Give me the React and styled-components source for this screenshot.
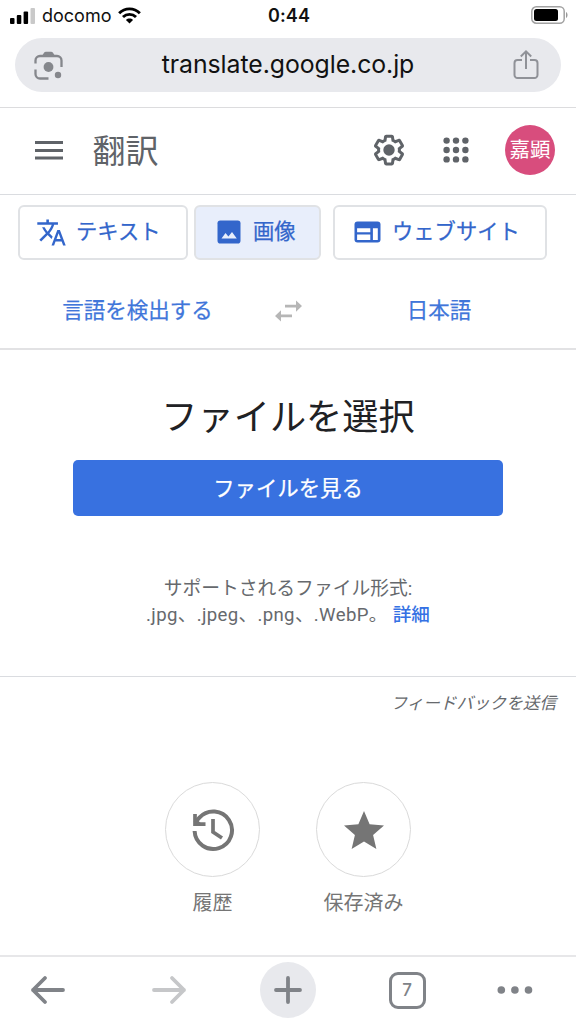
import React from 'react';
import styled, { createGlobalStyle } from 'styled-components';

const GlobalStyle = createGlobalStyle`
	* {
		box-sizing: border-box;
	}
	body {
		margin: 0;
		background: #fff;
		font-family: Roboto, 'Noto Sans CJK JP', sans-serif;
	}
	svg {
		display: block;
		flex-shrink: 0;
	}
	button {
		font-family: inherit;
		margin: 0;
		padding: 0;
		border: 0;
		background: none;
	}
`;

const Screen = styled.div`
	width: 576px;
	height: 1024px;
	display: flex;
	flex-direction: column;
	overflow: hidden;
	background: #fff;
`;

const StatusBar = styled.div`
	height: 38px;
	padding: 0 8px 7px 10px;
	display: grid;
	grid-template-columns: 1fr auto 1fr;
	align-items: center;
	font-family: Inter, sans-serif;
	font-size: 18px;
	color: #111;
`;

const Carrier = styled.div`
	display: flex;
	align-items: center;
	gap: 7px;
`;

const Clock = styled.div`
	font-weight: 600;
	font-size: 18px;
	letter-spacing: 0.1px;
`;

const Battery = styled.div`
	display: flex;
	justify-content: flex-end;
	padding-bottom: 1px;
`;

const AddressArea = styled.div`
	height: 70px;
	padding: 0 15px;
	border-bottom: 1px solid #dcdcde;
`;

const AddressBar = styled.div`
	height: 54px;
	padding: 0 22px 0 19px;
	border-radius: 27px;
	background: #e8e9ed;
	display: flex;
	align-items: center;
	justify-content: space-between;
	font-family: Inter, sans-serif;
	font-size: 24.8px;
	letter-spacing: -0.05px;
	color: #111;
`;

const Url = styled.span`
	padding-bottom: 2px;
`;

const Header = styled.header`
	height: 87px;
	padding: 0 21px 2px 34px;
	border-bottom: 1px solid #dadce0;
	display: flex;
	align-items: center;
`;

const Title = styled.h1`
	margin: 0 auto 0 28.5px;
	padding-top: 4px;
	font-size: 33px;
	font-weight: 400;
	line-height: 40px;
	color: #5f6368;
`;

const Avatar = styled.div`
	width: 50px;
	height: 50px;
	margin-left: 36px;
	border-radius: 50%;
	background: #d84d7d;
	color: #fff;
	font-size: 20.5px;
	line-height: 50px;
	text-align: center;
`;

const AppsButton = styled.div`
	margin-left: 36px;
`;

const Tabs = styled.nav`
	padding: 10px 0 0 18px;
	display: flex;
`;

const Tab = styled.button`
	width: ${props => props.$width}px;
	height: 55px;
	margin-right: ${props => props.$gap || 0}px;
	padding: 0 0 1px ${props => props.$inset}px;
	border: 2px solid #e0e2e5;
	border-radius: 6px;
	background: ${props => (props.$active ? '#e8eefb' : '#fff')};
	color: #3366cb;
	display: flex;
	align-items: center;
	gap: ${props => props.$space}px;
	font-size: 21.3px;
	font-weight: 400;
	line-height: 30px;
	-webkit-text-stroke: 0.25px;
`;

const Languages = styled.div`
	height: 90px;
	padding-top: 14px;
	border-bottom: 2px solid #e2e2e4;
	display: grid;
	grid-template-columns: 275px 27px 274px;
	align-items: center;
`;

const Language = styled.button`
	font-size: 21.5px;
	font-weight: 400;
	line-height: 30px;
	color: #4076da;
	-webkit-text-stroke: 0.25px;
`;

const Upload = styled.main`
	height: 327px;
	padding-top: 41px;
	border-bottom: 1px solid #dadce0;
	display: flex;
	flex-direction: column;
	align-items: center;
`;

const Heading = styled.h2`
	margin: 0;
	font-size: 36.2px;
	font-weight: 400;
	line-height: 54px;
	color: #202124;
`;

const BrowseButton = styled.button`
	width: 430px;
	height: 56px;
	margin: 15px 0 60px;
	padding-top: 1px;
	border-radius: 5px;
	background: #3871e0;
	color: #fff;
	font-size: 21.4px;
	font-weight: 400;
	line-height: 30px;
	-webkit-text-stroke: 0.25px;
`;

const Formats = styled.p`
	margin: 0;
	font-size: 18.8px;
	line-height: 26px;
	text-align: center;
	color: #66696d;
`;

const FormatList = styled.span`
	font-size: 18.6px;
	letter-spacing: 0.35px;
`;

const DetailLink = styled.a`
	margin-left: 5px;
	font-size: 18.6px;
	font-weight: 500;
	color: #3471e4;
`;

const Feedback = styled.div`
	height: 105px;
	padding: 15px 20px 0 0;
	text-align: right;
	font-size: 16.6px;
	font-style: italic;
	line-height: 24px;
	color: #66696d;
`;

const Shortcuts = styled.div`
	height: 173px;
	display: flex;
	justify-content: center;
	gap: 56px;
`;

const Shortcut = styled.div`
	width: 95px;
	display: flex;
	flex-direction: column;
	align-items: center;
	font-size: 20px;
	line-height: 30px;
	color: #757575;
	white-space: nowrap;
`;

const ShortcutCircle = styled.div`
	width: 95px;
	height: 95px;
	margin-bottom: 11px;
	border: 1px solid #dadada;
	border-radius: 50%;
	display: flex;
	align-items: center;
	justify-content: center;
`;

const BottomBar = styled.footer`
	height: 69px;
	border-top: 2px solid #e7e7e9;
	padding: 0 25px 1px 0;
	display: grid;
	grid-template-columns: 96px 145px 94px 144px 1fr;
	align-items: center;
	justify-items: center;
`;

const NewTab = styled.button`
	width: 56px;
	height: 56px;
	border-radius: 50%;
	background: #e8e9ed;
	display: flex;
	align-items: center;
	justify-content: center;
`;

const TabCount = styled.button`
	width: 37px;
	height: 37px;
	border: 3px solid #808388;
	border-radius: 9px;
	font-family: Inter, sans-serif;
	font-size: 17px;
	font-weight: 500;
	line-height: 31px;
	color: #808388;
`;

const SignalIcon = () => (
	<svg width="25" height="16" viewBox="0 0 25 16">
		<rect x="0" y="10" width="4.5" height="6" rx="1" fill="#000" />
		<rect x="6.8" y="7" width="4.5" height="9" rx="1" fill="#000" />
		<rect x="13.6" y="3.5" width="4.5" height="12.5" rx="1" fill="#000" />
		<rect x="20.5" y="0" width="4.5" height="16" rx="1" fill="#c9c9c9" />
	</svg>
);

const WifiIcon = () => (
	<svg width="23" height="17" viewBox="0 0 24 17" fill="none" stroke="#000" strokeWidth="3">
		<path d="M1.2 6.1C7.2.1 16.8.1 22.8 6.1" />
		<path d="M5.2 10.1c3.8-3.7 9.8-3.7 13.6 0" />
		<path d="M8.3 13.1c2.1-2 5.3-2 7.4 0L12 16.9z" fill="#000" stroke="none" />
	</svg>
);

const BatteryIcon = () => (
	<svg width="37" height="18" viewBox="0 0 37 18">
		<rect x=".8" y=".8" width="32.4" height="16.4" rx="4.5" fill="none" stroke="#a2a2a2" strokeWidth="1.5" />
		<rect x="3" y="3" width="24" height="12" rx="2.5" fill="#000" />
		<path d="M35 6c2 .8 2 5.2 0 6z" fill="#999" />
	</svg>
);

const LensIcon = () => (
	<svg width="29" height="29" viewBox="0 0 29 29" fill="none" stroke="#85878c" strokeWidth="2.3">
		<path d="M1.5 12.5V9.5A4.5 4.5 0 0 1 6 5h17a4.5 4.5 0 0 1 4.5 4.5V16" />
		<path d="M1.5 18.5V23A4.5 4.5 0 0 0 6 27.5h8.5" />
		<path d="M8 5l2-3.2Q10.6.8 12 .8h5q1.4 0 2 1L21 5z" fill="#85878c" stroke="none" />
		<circle cx="14.5" cy="16" r="4.9" fill="#85878c" stroke="none" />
		<circle cx="24" cy="24" r="3.2" fill="#85878c" stroke="none" />
	</svg>
);

const ShareIcon = () => (
	<svg width="26" height="30" viewBox="0 0 26 30" fill="none" stroke="#909298" strokeWidth="2">
		<path d="M9 10H4.5a3 3 0 0 0-3 3v12a3 3 0 0 0 3 3h17a3 3 0 0 0 3-3V13a3 3 0 0 0-3-3H17" />
		<path d="M13 19V1.5M7.8 6.5L13 1.4l5.2 5.1" />
	</svg>
);

const MenuIcon = () => (
	<svg width="30" height="20" viewBox="0 0 30 20" fill="#5f6368">
		<rect x="1" y="1" width="28" height="3" />
		<rect x="1" y="9" width="28" height="3" />
		<rect x="1" y="16.5" width="28" height="3" />
	</svg>
);

const SettingsIcon = () => (
	<svg width="36" height="36" viewBox="0 0 24 24" fill="#5f6368">
		<path d="M13.85 22.25h-3.7c-.74 0-1.36-.54-1.45-1.27l-.27-1.89c-.27-.14-.53-.29-.79-.46l-1.8.72c-.7.26-1.47-.03-1.81-.65L2.2 15.53c-.35-.66-.2-1.44.36-1.88l1.53-1.19c-.01-.15-.02-.3-.02-.46 0-.15.01-.31.02-.46l-1.52-1.19c-.59-.45-.74-1.26-.37-1.88l1.85-3.19c.34-.62 1.11-.9 1.79-.63l1.81.73c.26-.17.52-.32.78-.46l.27-1.91c.09-.7.71-1.25 1.44-1.25h3.7c.74 0 1.36.54 1.45 1.27l.27 1.89c.27.14.53.29.79.46l1.8-.72c.71-.26 1.48.03 1.82.65l1.84 3.18c.36.66.2 1.44-.36 1.88l-1.52 1.19c.01.15.02.3.02.46s-.01.31-.02.46l1.52 1.19c.56.45.72 1.23.37 1.86l-1.86 3.22c-.34.62-1.11.9-1.8.63l-1.8-.72c-.26.17-.52.32-.78.46l-.27 1.91c-.1.68-.72 1.22-1.46 1.22zm-3.23-2h2.76l.37-2.55.53-.22c.44-.18.88-.44 1.34-.78l.45-.34 2.38.96 1.38-2.4-2.03-1.58.07-.56c.03-.26.06-.51.06-.78s-.03-.53-.06-.78l-.07-.56 2.03-1.58-1.39-2.4-2.39.96-.45-.35c-.42-.32-.87-.58-1.33-.77l-.52-.22-.37-2.55h-2.76l-.37 2.55-.53.21c-.44.19-.88.44-1.34.79l-.45.33-2.38-.95-1.39 2.39 2.03 1.58-.07.56a7 7 0 0 0-.06.79c0 .26.02.53.06.78l.07.56-2.03 1.58 1.38 2.4 2.39-.96.45.35c.43.33.86.58 1.33.77l.53.22.38 2.55z" />
		<circle cx="12" cy="12" r="3.8" />
	</svg>
);

const AppsIcon = () => (
	<svg width="26" height="26" viewBox="0 0 26 26" fill="#5f6368">
		{[3.6, 13, 22.4].map(y =>
			[3.6, 13, 22.4].map(x => <circle key={`${x}-${y}`} cx={x} cy={y} r="3.2" />)
		)}
	</svg>
);

const TranslateIcon = () => (
	<svg width="31" height="31" viewBox="0 0 24 24" fill="#3366cb">
		<path d="M12.87 15.07l-2.54-2.51.03-.03c1.74-1.94 2.98-4.17 3.71-6.53H17V4h-7V2H8v2H1v1.99h11.17C11.5 7.92 10.44 9.75 9 11.35 8.07 10.32 7.3 9.19 6.69 8h-2c.73 1.63 1.73 3.17 2.98 4.56l-5.09 5.02L4 19l5-5 3.11 3.11.76-2.04zM18.5 10h-2L12 22h2l1.12-3h4.75L21 22h2l-4.5-12zm-2.62 7l1.62-4.33L19.12 17h-3.24z" />
	</svg>
);

const ImageIcon = () => (
	<svg width="24" height="24" viewBox="0 0 24 24">
		<rect x=".5" y=".5" width="23" height="23" rx="2.8" fill="#3366cb" />
		<path d="M4.5 18.5l4-5.5 2.9 3.4 3.6-4.4 4.8 6.5z" fill="#e8eefb" />
	</svg>
);

const WebIcon = () => (
	<svg width="27" height="22" viewBox="0 0 27 22">
		<rect x=".5" y=".5" width="26" height="21" rx="3" fill="#3366cb" />
		<path d="M3.1 7.2h13.2v4H3.1zM3.1 13.5h13.2V19H3.1zM18.9 7.2h4.9V19h-4.9z" fill="#fff" />
	</svg>
);

const SwapIcon = () => (
	<svg width="27" height="22" viewBox="0 0 27 22" fill="#b6b6b6">
		<path d="M10 4.7h11V.5l6 5.6-6 5.6V7.5H10z" />
		<path d="M17 14.5H6v-4.2l-6 5.6 6 5.6v-4.2h11z" />
	</svg>
);

const HistoryIcon = () => (
	<svg width="44" height="44" viewBox="0 0 44 44" fill="none" stroke="#757575" strokeWidth="4">
		<path d="M3.6 23a18.7 18.7 0 1 0 4.8-13.3L4 14.5" />
		<path d="M4 6v10.2h10.5" strokeWidth="3.7" />
		<path d="M22 11v13l9 6" strokeWidth="3.7" />
		<path d="M4 9.5v6.700h7z" fill="#757575" stroke="none" />
	</svg>
);

const StarIcon = () => (
	<svg width="40" height="38" viewBox="0 0 20 19" fill="#757575">
		<path d="M10 15.27L16.18 19l-1.64-7.03L20 7.24l-7.19-.61L10 0 7.19 6.63 0 7.24l5.46 4.73L3.82 19z" />
	</svg>
);

const ArrowIcon = ({ color, forward }) => (
	<svg width="36" height="30" viewBox="0 0 36 30" fill="none" stroke={color} strokeWidth="3.8" strokeLinecap="round" strokeLinejoin="round">
		<path d={forward ? 'M3 15h30M21 3l12 12-12 12' : 'M33 15H3M15 3L3 15l12 12'} />
	</svg>
);

const PlusIcon = () => (
	<svg width="28" height="28" viewBox="0 0 28 28" stroke="#808388" strokeWidth="3.8" strokeLinecap="round">
		<path d="M14 2v24M2 14h24" />
	</svg>
);

const MoreIcon = () => (
	<svg width="36" height="8" viewBox="0 0 36 8" fill="#808388">
		<circle cx="4.3" cy="4" r="3.8" />
		<circle cx="17.9" cy="4" r="3.8" />
		<circle cx="31.5" cy="4" r="3.8" />
	</svg>
);

class App extends React.Component {
	render() {
		return (
			<Screen>
				<GlobalStyle />
				<StatusBar>
					<Carrier>
						<SignalIcon />
						docomo
						<WifiIcon />
					</Carrier>
					<Clock>0:44</Clock>
					<Battery>
						<BatteryIcon />
					</Battery>
				</StatusBar>
				<AddressArea>
					<AddressBar>
						<LensIcon />
						<Url>translate.google.co.jp</Url>
						<ShareIcon />
					</AddressBar>
				</AddressArea>
				<Header>
					<MenuIcon />
					<Title>翻訳</Title>
					<SettingsIcon />
					<AppsButton>
						<AppsIcon />
					</AppsButton>
					<Avatar>嘉顕</Avatar>
				</Header>
				<Tabs>
					<Tab $width={170} $inset={16} $space={9} $gap={6}>
						<TranslateIcon />
						テキスト
					</Tab>
					<Tab $width={127} $inset={21} $space={12} $gap={12} $active>
						<ImageIcon />
						画像
					</Tab>
					<Tab $width={214} $inset={19} $space={11}>
						<WebIcon />
						ウェブサイト
					</Tab>
				</Tabs>
				<Languages>
					<Language>言語を検出する</Language>
					<SwapIcon />
					<Language>日本語</Language>
				</Languages>
				<Upload>
					<Heading>ファイルを選択</Heading>
					<BrowseButton>ファイルを見る</BrowseButton>
					<Formats>
						サポートされるファイル形式:
						<br />
						<FormatList>.jpg、.jpeg、.png、.WebP。</FormatList>
						<DetailLink>詳細</DetailLink>
					</Formats>
				</Upload>
				<Feedback>フィードバックを送信</Feedback>
				<Shortcuts>
					<Shortcut>
						<ShortcutCircle>
							<HistoryIcon />
						</ShortcutCircle>
						履歴
					</Shortcut>
					<Shortcut>
						<ShortcutCircle>
							<StarIcon />
						</ShortcutCircle>
						保存済み
					</Shortcut>
				</Shortcuts>
				<BottomBar>
					<ArrowIcon color="#808388" />
					<ArrowIcon color="#c6c7c9" forward />
					<NewTab>
						<PlusIcon />
					</NewTab>
					<TabCount>7</TabCount>
					<MoreIcon />
				</BottomBar>
			</Screen>
		);
	}
}

export default App;
